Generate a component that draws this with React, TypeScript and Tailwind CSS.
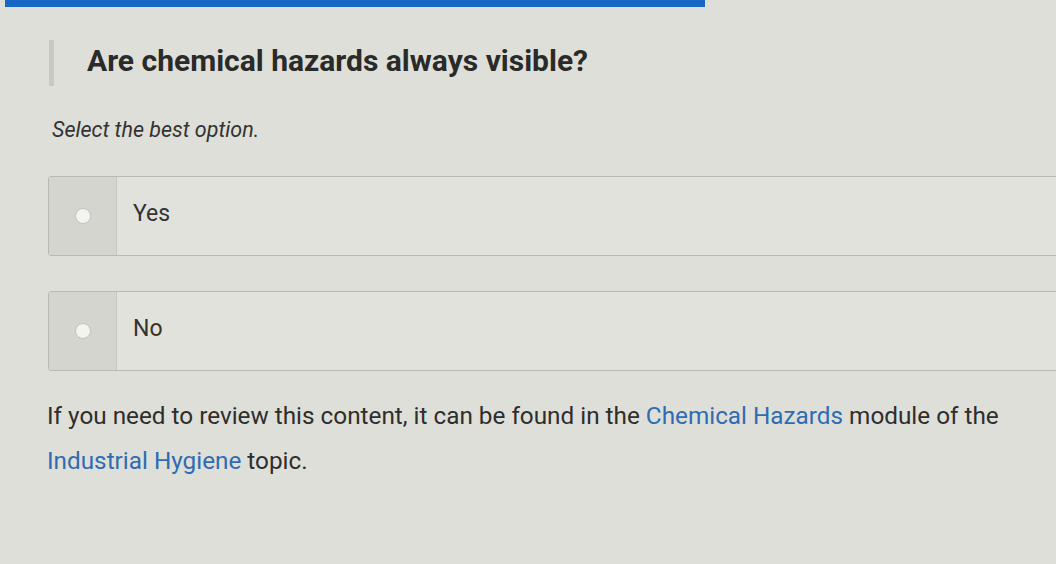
import React from "react";

const options = ["Yes", "No"];

const Option = ({ label }: { label: string }) => (
  <div className="flex h-[80px] -mr-4 rounded-[3px] border border-[#b9b9b4] bg-[#e2e2dc]">
    <div className="flex w-[68px] shrink-0 items-center justify-center rounded-l-[3px] border-r border-[#c6c6c1] bg-[#d5d5d0]">
      <span className="block h-[16px] w-[16px] rounded-full border border-[#c2c2bd] bg-[#f3f3f0]"></span>
    </div>
    <div className="flex items-center pb-[4px] pl-[16px] text-[23px] text-[#333331]">{label}</div>
  </div>
);

export default function App() {
  return (
    <div
      className="min-h-[564px] w-[1056px] overflow-hidden bg-[#dfdfd9]"
      style={{ fontFamily: "Roboto, 'Liberation Sans', sans-serif" }}
    >
      {/* top accent bar */}
      <div className="ml-[5px] h-[7px] w-[700px] bg-[#1666c4]"></div>

      {/* question header */}
      <div className="mt-[33px] flex items-center pl-[49px]">
        <div className="h-[46px] w-[5px] bg-[#c9c9c4]"></div>
        <h1 className="ml-[33px] -mt-[6px] text-[30px] font-bold text-[#2a2a29]">
          Are chemical hazards always visible?
        </h1>
      </div>

      <p className="mt-[28px] pl-[52px] text-[21.5px] italic text-[#333331]">Select the best option.</p>

      {/* answer choices */}
      <div className="mt-[30px] flex flex-col gap-[35px] pl-[48px]">
        {options.map((o) => (
          <Option key={o} label={o} />
        ))}
      </div>

      {/* review note */}
      <p className="mt-[22px] whitespace-nowrap pl-[47px] text-[24.3px] leading-[45px] text-[#2e2e2d]">
        If you need to review this content, it can be found in the{" "}
        <span className="text-[#2f6cb3]">Chemical Hazards</span> module of the
        <br />
        <span className="text-[#2f6cb3]">Industrial Hygiene</span> topic.
      </p>
    </div>
  );
}
